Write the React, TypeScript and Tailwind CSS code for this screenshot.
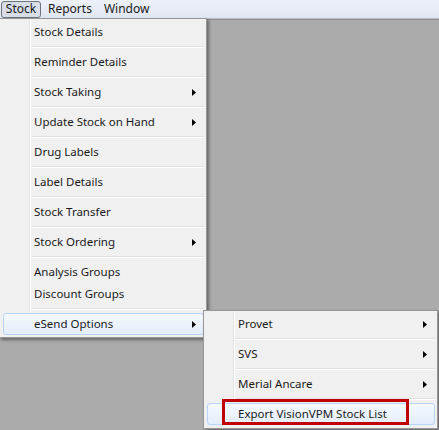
import React from 'react';

type Entry = { label: string; sub?: boolean; sep?: boolean; active?: boolean };

const stockMenu: Entry[] = [
  { label: 'Stock Details', sep: true },
  { label: 'Reminder Details', sep: true },
  { label: 'Stock Taking', sub: true, sep: true },
  { label: 'Update Stock on Hand', sub: true, sep: true },
  { label: 'Drug Labels', sep: true },
  { label: 'Label Details', sep: true },
  { label: 'Stock Transfer', sep: true },
  { label: 'Stock Ordering', sub: true, sep: true },
  { label: 'Analysis Groups' },
  { label: 'Discount Groups', sep: true },
  { label: 'eSend Options', sub: true, active: true },
];

const esendMenu: Entry[] = [
  { label: 'Provet', sub: true, sep: true },
  { label: 'SVS', sub: true, sep: true },
  { label: 'Merial Ancare', sub: true, sep: true },
  { label: 'Export VisionVPM Stock List', active: true },
];

function Arrow() {
  return (
    <svg width="4" height="7" viewBox="0 0 4 7" className="shrink-0">
      <path d="M0 0 L4 3.5 L0 7 Z" fill="#000" />
    </svg>
  );
}

function MenuItem({ item }: { item: Entry }) {
  return (
    <>
      <div className="relative flex h-[22px] items-center pr-[10px] pl-[34px]">
        {item.active && (
          <div className="absolute inset-y-0 right-[2px] left-[3px] rounded-[3px] border border-[#b8d6fb] bg-gradient-to-b from-[#f5f9fe] to-[#e3edfb]" />
        )}
        <span className="relative flex-1 whitespace-nowrap">{item.label}</span>
        {item.sub && (
          <span className="relative">
            <Arrow />
          </span>
        )}
      </div>
      {item.sep && (
        <div className="flex h-[8px] items-center pl-[32px] pr-[2px]">
          <div className="h-[2px] w-full border-t border-b border-t-[#e0e0e0] border-b-white" />
        </div>
      )}
    </>
  );
}

function Menu({ items, className }: { items: Entry[]; className: string }) {
  return (
    <div
      className={`absolute border border-[#979797] bg-[#f0f0f0] text-[11.5px] shadow-[2px_2px_3px_rgba(0,0,0,0.4)] ${className}`}
    >
      <div className="absolute top-[2px] bottom-[2px] left-[29px] w-[2px] border-l border-r border-l-[#e2e3e3] border-r-white" />
      <div className="relative">
        {items.map((item) => (
          <MenuItem key={item.label} item={item} />
        ))}
      </div>
    </div>
  );
}

export default function App() {
  return (
    <div
      className="flex h-[430px] w-[439px] flex-col overflow-hidden bg-[#ababab] text-[12px] text-[#1a1a1a]"
      style={{ fontFamily: '"Noto Sans", sans-serif' }}
    >
      <div className="flex h-[19px] shrink-0 items-center gap-[2px] border-b border-[#b9bdc6] bg-gradient-to-b from-[#eef1f9] to-[#e0e6f3] pl-[1px]">
        <div className="flex h-[17px] w-[40px] items-center justify-center rounded-[3px] border border-[#6f737a] bg-[#d8dde8]">
          Stock
        </div>
        <div className="px-[5px]">Reports</div>
        <div className="px-[5px]">Window</div>
      </div>
      <div className="relative flex-1 border-t border-[#8d8d8d]">
        <Menu items={stockMenu} className="top-[-2px] left-[-1px] w-[208px] pt-[2px] pb-[2px]" />
        <Menu items={esendMenu} className="top-[290px] left-[203px] w-[235px] pt-[2px] pb-[3px]" />
        <div className="absolute top-[379px] left-[222px] h-[26px] w-[187px] border-[3px] border-[#c00000]" />
      </div>
    </div>
  );
}
